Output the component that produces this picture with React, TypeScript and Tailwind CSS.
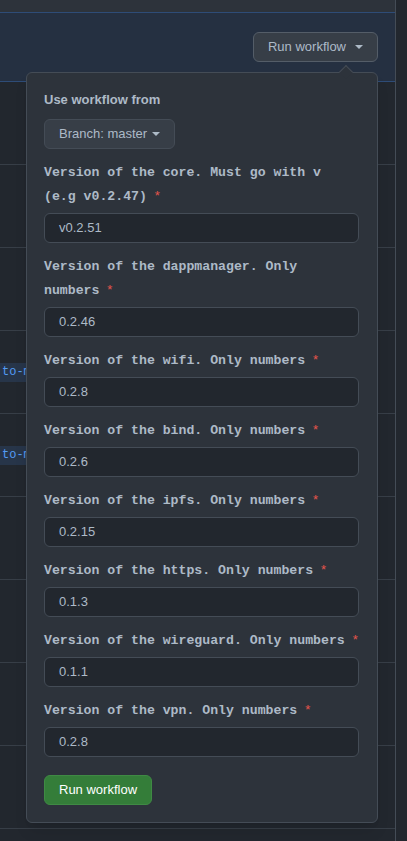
import React from 'react';

const fields = [
  { label: 'Version of the core. Must go with v (e.g v0.2.47)', value: 'v0.2.51' },
  { label: 'Version of the dappmanager. Only numbers', value: '0.2.46' },
  { label: 'Version of the wifi. Only numbers', value: '0.2.8' },
  { label: 'Version of the bind. Only numbers', value: '0.2.6' },
  { label: 'Version of the ipfs. Only numbers', value: '0.2.15' },
  { label: 'Version of the https. Only numbers', value: '0.1.3' },
  { label: 'Version of the wireguard. Only numbers', value: '0.1.1' },
  { label: 'Version of the vpn. Only numbers', value: '0.2.8' },
];

// rows of the runs list behind the menu; some show a branch chip
const rows = [false, false, false, true, true, false, false, false, false];

const sans = "font-['Liberation_Sans',Arial,sans-serif]";
const mono = "font-['Liberation_Mono','Courier_New',monospace]";

function Caret() {
  return <span className="inline-block w-0 h-0 border-x-[4px] border-t-[4px] border-x-transparent border-t-[#adbac7]" />;
}

export default function App() {
  return (
    <div className={`w-[407px] h-[841px] overflow-hidden bg-[#22272e] flex ${sans}`}>
      <div className="flex-1 flex flex-col">
        <div className="h-[12px] bg-[#2d333b]" />

        <div className="h-[70px] bg-[#253041] border-y border-[#2e4c77] flex items-center justify-end pr-[17px]">
          <div className="relative">
            <button className="h-[30px] flex items-center gap-[9px] px-[14px] rounded-md bg-[#373e47] border border-[#545d68] text-[13px] text-[#adbac7]">
              Run workflow
              <Caret />
            </button>

            <div className="absolute right-0 top-full mt-[10px] w-[352px] z-10 bg-[#2d333b] border border-[#444c56] rounded-md pt-[17px] pb-[17px] pl-[17px] pr-[18px] shadow-lg">
              <span className="absolute -top-[6px] right-[26px] w-[10px] h-[10px] rotate-45 bg-[#2d333b] border-l border-t border-[#444c56]" />

              <div className="text-[13px] leading-[20px] font-bold text-[#adbac7]">Use workflow from</div>
              <button className="mt-[9px] h-[30px] flex items-center gap-[5px] px-[14px] rounded-md bg-[#373e47] border border-[#444c56] text-[13px] text-[#adbac7]">
                Branch: master
                <Caret />
              </button>

              {fields.map((f, i) => (
                <div key={i} className="mt-[10px]">
                  <div className={`${mono} pt-[2px] text-[13.2px] leading-[24px] font-bold text-[#adbac7]`}>
                    {f.label} <span className={`${sans} text-[13px] leading-none font-normal text-[#e5534b]`}>*</span>
                  </div>
                  <div className="mt-[4px] h-[30px] flex items-center px-[14px] rounded-md bg-[#22272e] border border-[#444c56] text-[13px] text-[#adbac7]">
                    {f.value}
                  </div>
                </div>
              ))}

              <button className="mt-[18px] h-[30px] flex items-center px-[14px] rounded-md bg-[#347d39] border border-[#3f8a44] text-[13px] text-white">
                Run workflow
              </button>
            </div>
          </div>
        </div>

        {rows.map((chip, i) => (
          <div key={i} className="h-[83px] shrink-0 border-b border-[#373e47] flex items-center">
            {chip && (
              <span className={`${mono} text-[12px] leading-[19px] pl-[2px] pr-2 bg-[#273549] text-[#539bf5] rounded-r`}>
                to-main
              </span>
            )}
          </div>
        ))}
      </div>
      <div className="w-[12px] border-l border-[#444c56]" />
    </div>
  );
}
